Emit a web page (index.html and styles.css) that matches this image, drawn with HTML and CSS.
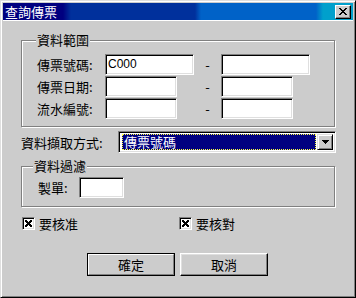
FILE: index.html
```html
<!DOCTYPE html>
<html lang="zh-Hant">
<head>
    <meta charset="UTF-8">
    <meta name="viewport" content="width=device-width, initial-scale=1.0">
    <title>查詢傳票</title>
    <link rel="stylesheet" href="styles.css">
</head>
<body>
    <div class="window">
        <div class="titlebar">
            <span class="title">查詢傳票</span>
            <div class="close-btn">
                <svg width="8" height="7" viewBox="0 0 8 7"><path d="M0 0h2v1h1v1h2V1h1V0h2v1H7v1H6v1H5v1h1v1h1v1h1v1H6V6H5V5H3v1H2v1H0V6h1V5h1V4h1V3H2V2H1V1H0z" fill="#000"/></svg>
            </div>
        </div>

        <div class="client">
            <fieldset class="group">
                <legend>資料範圍</legend>
                <div class="range-grid">
                    <span class="label">傳票號碼:</span>
                    <span class="field full">C000</span>
                    <span class="dash">-</span>
                    <span class="field full"></span>

                    <span class="label">傳票日期:</span>
                    <span class="field short"></span>
                    <span class="dash">-</span>
                    <span class="field short"></span>

                    <span class="label">流水編號:</span>
                    <span class="field short"></span>
                    <span class="dash">-</span>
                    <span class="field short"></span>
                </div>
            </fieldset>

            <div class="combo-row">
                <span class="combo-label">資料擷取方式:</span>
                <div class="combo">
                    <span class="combo-value"><span class="selected">傳票號碼</span></span>
                    <span class="combo-btn">
                        <svg width="7" height="4" viewBox="0 0 7 4"><path d="M0 0h7v1H6v1H5v1H4v1H3V3H2V2H1V1H0z" fill="#000"/></svg>
                    </span>
                </div>
            </div>

            <fieldset class="group filter">
                <legend>資料過濾</legend>
                <div class="filter-row">
                    <span class="filter-label">製單:</span>
                    <span class="field maker"></span>
                </div>
            </fieldset>

            <div class="checks">
                <label class="check">
                    <span class="box"><svg width="7" height="7" viewBox="0 0 7 7"><path d="M0 0h2v1h1v1h1V1h1V0h2v2H6v1H5v1h1v1h1v2H5V6H4V5H3v1H2v1H0V5h1V4h1V3H1V2H0z" fill="#000"/></svg></span>
                    要核准
                </label>
                <label class="check">
                    <span class="box"><svg width="7" height="7" viewBox="0 0 7 7"><path d="M0 0h2v1h1v1h1V1h1V0h2v2H6v1H5v1h1v1h1v2H5V6H4V5H3v1H2v1H0V5h1V4h1V3H1V2H0z" fill="#000"/></svg></span>
                    要核對
                </label>
            </div>

            <div class="buttons">
                <div class="btn default"><span class="btn-face">確定</span></div>
                <div class="btn"><span class="btn-face">取消</span></div>
            </div>
        </div>
    </div>
</body>
</html>
```

FILE: styles.css
```css
body {
    margin: 0;
    font-family: "Noto Sans CJK TC", "Liberation Sans", sans-serif;
    font-size: 13px;
    color: #000;
}
.window {
    width: 356px;
    height: 298px;
    box-sizing: border-box;
    background: #cccccc;
    border: 1px solid;
    border-color: #dfdfdf #000 #000 #dfdfdf;
    box-shadow: inset 1px 1px 0 #fff, inset -1px -1px 0 #808080;
    padding: 2px;
}
.titlebar {
    height: 17px;
    display: flex;
    align-items: center;
    justify-content: space-between;
    padding: 0 2px 0 2px;
    background: linear-gradient(to right,
        #000080 0, #000080 60px,
        #00309c 68px, #00309c 192px,
        #0062c8 198px, #0062c8 313px,
        #00a0cc 320px, #00a0cc 100%);
}
.title {
    color: #fff;
    font-size: 13px;
    line-height: 15px;
}
.close-btn {
    width: 16px;
    height: 14px;
    box-sizing: border-box;
    background: #cccccc;
    border: 1px solid;
    border-color: #fff #000 #000 #fff;
    box-shadow: inset -1px -1px 0 #808080;
    display: flex;
    align-items: center;
    justify-content: center;
}
.client {
    border-top: 1px solid #fff;
    padding: 0 17px 0 18px;
}
.group {
    margin: 12px 1px 0 0;
    padding: 7px 0 6px 15px;
    border: 1px solid #808080;
    box-shadow: inset 1px 1px 0 #fff, 1px 1px 0 #fff;
    min-width: 0;
}
.group legend {
    padding: 0 1px;
    margin-left: -1px;
    line-height: 14px;
    background: #cccccc;
}
.range-grid {
    display: grid;
    grid-template-columns: 68px 89px 27px 89px;
    grid-auto-rows: 22px;
    align-items: start;
}
.label {
    line-height: 21px;
}
.dash {
    text-align: center;
    line-height: 21px;
}
.field {
    display: block;
    height: 21px;
    box-sizing: border-box;
    background: #fff;
    border: 1px solid;
    border-color: #808080 #fff #fff #808080;
    box-shadow: inset 1px 1px 0 #000, inset -1px -1px 0 #dfdfdf;
    font-family: "Liberation Sans", sans-serif;
    font-size: 12px;
    line-height: 19px;
    padding-left: 2px;
}
.field.full {
    width: 89px;
}
.field.short {
    width: 72px;
}
.combo-row {
    display: flex;
    align-items: center;
    margin-top: 4px;
}
.combo-label {
    width: 97px;
}
.combo {
    width: 218px;
    height: 22px;
    box-sizing: border-box;
    display: flex;
    padding: 2px;
    background: #fff;
    border: 1px solid;
    border-color: #808080 #fff #fff #808080;
    box-shadow: inset 1px 1px 0 #000, inset -1px -1px 0 #dfdfdf;
}
.combo-value {
    flex: 1;
    padding: 0 1px;
}
.selected {
    display: block;
    height: 16px;
    box-sizing: border-box;
    background: #000080;
    color: #fff;
    outline: 1px dotted #ffff40;
    outline-offset: -1px;
    line-height: 16px;
    padding-left: 2px;
}
.combo-btn {
    width: 16px;
    height: 16px;
    box-sizing: border-box;
    background: #cccccc;
    border: 1px solid;
    border-color: #dfdfdf #000 #000 #dfdfdf;
    box-shadow: inset 1px 1px 0 #fff, inset -1px -1px 0 #808080;
    display: flex;
    align-items: center;
    justify-content: center;
}
.filter {
    margin-top: 6px;
    padding: 4px 0 8px 16px;
}
.filter legend {
    margin-left: -5px;
}
.filter-row {
    display: flex;
    align-items: center;
}
.filter-label {
    width: 41px;
}
.field.maker {
    width: 45px;
}
.checks {
    display: flex;
    margin: 10px 0 0 1px;
}
.check {
    width: 158px;
    display: flex;
    align-items: center;
    gap: 4px;
    line-height: 13px;
}
.box {
    width: 13px;
    height: 13px;
    box-sizing: border-box;
    background: #fff;
    border: 1px solid;
    border-color: #808080 #fff #fff #808080;
    box-shadow: inset 1px 1px 0 #000, inset -1px -1px 0 #dfdfdf;
    display: flex;
    align-items: center;
    justify-content: center;
}
.buttons {
    display: flex;
    gap: 5px;
    margin-top: 23px;
    padding-left: 66px;
}
.btn {
    width: 88px;
    height: 23px;
    box-sizing: border-box;
    display: flex;
}
.btn.default {
    border: 1px solid #000;
}
.btn-face {
    flex: 1;
    display: flex;
    align-items: center;
    justify-content: center;
    border: 1px solid;
    border-color: #fff #000 #000 #fff;
    box-shadow: inset -1px -1px 0 #808080, inset 1px 1px 0 #dfdfdf;
}
.btn.default .btn-face {
    border-color: #fff #808080 #808080 #fff;
    box-shadow: none;
}
```
